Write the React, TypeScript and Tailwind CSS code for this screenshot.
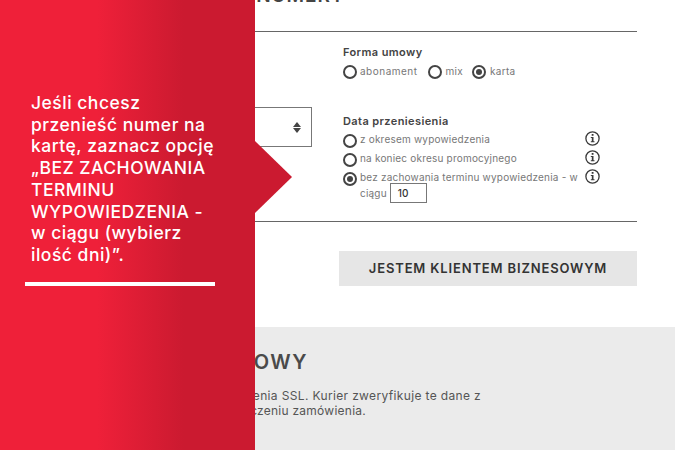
const font = { fontFamily: '"Inter", "Liberation Sans", sans-serif' };

function Radio({ checked }: { checked?: boolean }) {
  return (
    <span className="flex h-[14px] w-[14px] shrink-0 items-center justify-center rounded-full border-2 border-[#444]">
      {checked && <span className="h-[6px] w-[6px] rounded-full bg-[#444]" />}
    </span>
  );
}

function InfoIcon() {
  return (
    <svg width="15" height="15" viewBox="0 0 15 15" className="shrink-0">
      <circle cx="7.5" cy="7.5" r="6.6" fill="none" stroke="#3a3a3a" strokeWidth="1.3" />
      <rect x="6.7" y="3" width="1.8" height="1.8" fill="#3a3a3a" />
      <path d="M5.8 6.1h2.7v4.2h1v1H5.8v-1h1V7.1h-1z" fill="#3a3a3a" />
    </svg>
  );
}

function TransferRow({ label }: { label: string }) {
  return (
    <div className="flex h-[19px] items-start">
      <Radio />
      <span className="-mt-[2px] ml-[3px] text-[10px] leading-[14px] tracking-[0.2px] text-[#777]">{label}</span>
    </div>
  );
}

export default function App() {
  return (
    <div className="relative h-[450px] w-[675px] overflow-hidden bg-white" style={font}>
      <div className="ml-[30px] mr-[38px]">
        <div className="flex h-[32px] items-start justify-end border-b border-[#666] pr-[292px]">
          <h2 className="-mt-[14px] text-[19px] font-semibold leading-[20px] tracking-[1px] text-[#444]">NUMERY</h2>
        </div>
        <div className="flex h-[190px] border-b border-[#666]">
          <div className="w-[282px] pt-[75px]">
            <div className="flex h-[40px] items-center justify-end border border-[#777] pr-[10px]">
              <span className="flex flex-col gap-[1px]">
                <span className="h-0 w-0 border-x-[4px] border-b-[5px] border-x-transparent border-b-[#444]" />
                <span className="h-0 w-0 border-x-[4px] border-t-[5px] border-x-transparent border-t-[#444]" />
              </span>
            </div>
          </div>
          <div className="ml-[31px] flex-1 pt-[13px]">
            <h3 className="text-[11px] font-semibold leading-[14px] tracking-[0.4px] text-[#444]">Forma umowy</h3>
            <div className="mt-[5px] flex items-center">
              <Radio />
              <span className="ml-[3px] text-[10px] tracking-[0.5px] text-[#777]">abonament</span>
              <span className="ml-[10px]"><Radio /></span>
              <span className="ml-[4px] text-[10px] tracking-[0.3px] text-[#777]">mix</span>
              <span className="ml-[9px]"><Radio checked /></span>
              <span className="ml-[4px] text-[10px] tracking-[0.3px] text-[#777]">karta</span>
            </div>
            <h3 className="mt-[35px] text-[11px] font-semibold leading-[14px] tracking-[0.4px] text-[#444]">Data przeniesienia</h3>
            <div className="relative mt-[6px]">
              <TransferRow label="z okresem wypowiedzenia" />
              <TransferRow label="na koniec okresu promocyjnego" />
              <div className="flex items-start">
                <Radio checked />
                <p className="-mt-[2px] ml-[3px] w-[224px] text-[10px] leading-[14px] tracking-[0.2px] text-[#777]">
                  bez zachowania terminu wypowiedzenia - w ciągu
                  <span className="ml-[3px] inline-block h-[20px] w-[37px] -translate-y-px border border-[#777] pl-[7px] align-middle text-[10px] font-medium leading-[18px] tracking-normal text-[#333]">10</span>
                </p>
              </div>
              <div className="absolute right-[37px] top-[-3px] flex flex-col gap-[4px]">
                <InfoIcon />
                <InfoIcon />
                <InfoIcon />
              </div>
            </div>
          </div>
        </div>
        <div className="mt-[29px] flex justify-end">
          <button className="h-[35px] w-[298px] bg-[#e6e6e6] text-[13px] font-semibold tracking-[0.85px] text-[#333]">
            JESTEM KLIENTEM BIZNESOWYM
          </button>
        </div>
      </div>

      <section className="mt-[41px] h-[124px] bg-[#ebebeb] pl-[30px] pt-[23px]">
        <div className="flex justify-end pr-[367px]">
          <h2 className="text-[20px] font-semibold leading-[24px] tracking-[1.5px] text-[#4a4a4a]">BIZNESOWY</h2>
        </div>
        <div className="mt-[14px] flex justify-end pr-[194px] text-[12px] leading-[15px] tracking-[0.35px] text-[#555]">
          <p className="whitespace-nowrap">zabezpieczenia SSL. Kurier zweryfikuje te dane z</p>
        </div>
        <div className="flex justify-end pr-[309px] text-[12px] leading-[15px] tracking-[0.25px] text-[#555]">
          <p className="whitespace-nowrap">przy doręczeniu zamówienia.</p>
        </div>
      </section>

      <aside className="absolute left-0 top-0 h-[450px] w-[255px] bg-[linear-gradient(90deg,#ef2039_38%,#cb1a30_72%)] pl-[31px] pt-[92px]">
        <p className="w-[190px] text-[17.5px] font-medium leading-[21.7px] tracking-[0.5px] text-white">
          Jeśli chcesz przenieść numer na kartę, zaznacz opcję „BEZ ZACHOWANIA TERMINU WYPOWIEDZENIA - w ciągu (wybierz ilość dni)”.
        </p>
        <div className="-ml-[6px] mt-[16px] h-[4px] w-[190px] bg-white" />
        <span className="absolute left-full top-[141px] h-0 w-0 border-y-[36px] border-l-[37px] border-y-transparent border-l-[#cb1a30]" />
      </aside>
    </div>
  );
}
